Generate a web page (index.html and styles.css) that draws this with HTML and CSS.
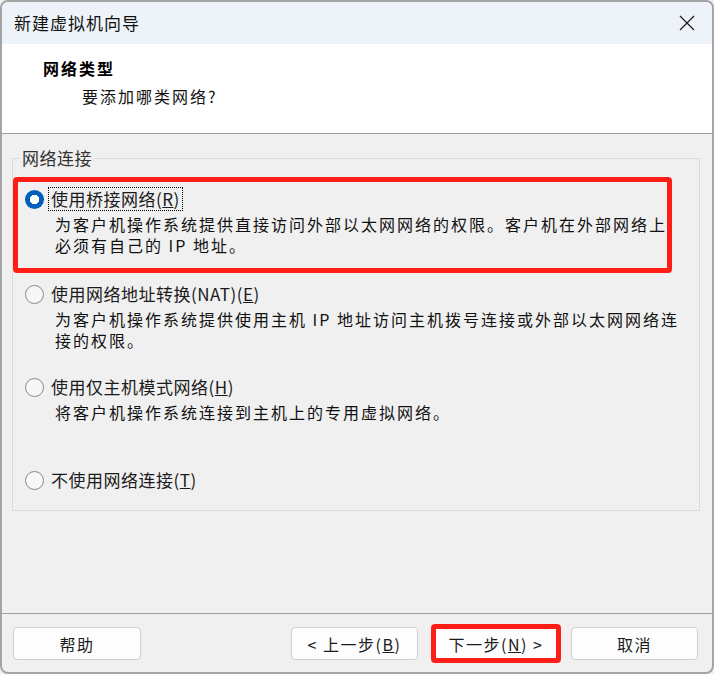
FILE: index.html
```
<!DOCTYPE html>
<html lang="zh-CN">
<head>
<meta charset="utf-8">
<title>新建虚拟机向导</title>
<link rel="stylesheet" href="styles.css">
</head>
<body>
<div class="window">
  <div class="titlebar">
    <span class="title">新建虚拟机向导</span>
    <svg class="close" width="16" height="16" viewBox="0 0 16 16"><path d="M1 1 L15 15 M15 1 L1 15" stroke="#1a1a1a" stroke-width="1.2" fill="none"/></svg>
  </div>
  <div class="header">
    <div class="h-title">网络类型</div>
    <div class="h-sub">要添加哪类网络?</div>
  </div>
  <div class="content">
    <fieldset class="group">
      <legend class="legend">网络连接</legend>
      <div class="option highlight">
        <div class="row"><span class="radio checked"></span><span class="label focus">使用桥接网络(<u>R</u>)</span></div>
        <div class="desc">
          <div class="line">为客户机操作系统提供直接访问外部以太网网络的权限。客户机在外部网络上</div>
          <div class="line">必须有自己的 IP 地址。</div>
        </div>
      </div>
      <div class="option">
        <div class="row"><span class="radio"></span><span class="label">使用网络地址转换(NAT)(<u>E</u>)</span></div>
        <div class="desc">
          <div class="line">为客户机操作系统提供使用主机 IP 地址访问主机拨号连接或外部以太网网络连</div>
          <div class="line">接的权限。</div>
        </div>
      </div>
      <div class="option">
        <div class="row"><span class="radio"></span><span class="label">使用仅主机模式网络(<u>H</u>)</span></div>
        <div class="desc">
          <div class="line">将客户机操作系统连接到主机上的专用虚拟网络。</div>
        </div>
      </div>
      <div class="option last">
        <div class="row"><span class="radio"></span><span class="label">不使用网络连接(<u>T</u>)</span></div>
      </div>
    </fieldset>
  </div>
  <div class="footer">
    <button class="btn">帮助</button>
    <button class="btn prev">&lt; 上一步(<u>B</u>)</button>
    <button class="btn next">下一步(<u>N</u>) &gt;</button>
    <button class="btn cancel">取消</button>
  </div>
</div>
</body>
</html>
```
FILE: styles.css
```
html, body {
  margin: 0;
  padding: 0;
  background: #f0f0f0;
}
body {
  font-family: "Noto Sans CJK SC", "Noto Sans", sans-serif;
  color: #000;
}
.window {
  width: 714px;
  height: 674px;
  box-sizing: border-box;
  border: 2px solid #a4a4a4;
  border-radius: 8px;
  overflow: hidden;
  display: flex;
  flex-direction: column;
  background: #f0f0f0;
}
.titlebar {
  height: 42px;
  flex: none;
  background: #edf3f8;
  display: flex;
  align-items: center;
  justify-content: space-between;
  padding: 0 17px 0 12px;
}
.title {
  font-size: 17px;
  letter-spacing: 1px;
  color: #111;
  line-height: 20px;
}
.close {
  display: block;
}
.header {
  height: 90px;
  flex: none;
  background: #fff;
  border-bottom: 1px solid #a0a0a0;
  padding: 14px 0 0 41px;
  box-sizing: border-box;
}
.h-title {
  font-size: 16px;
  font-weight: bold;
  letter-spacing: 2px;
  line-height: 20px;
}
.h-sub {
  font-size: 16px;
  letter-spacing: 2px;
  line-height: 20px;
  margin: 8px 0 0 39px;
  color: #111;
}
.content {
  flex: 1;
  padding: 16px 12px 0 10px;
}
.group {
  margin: 0;
  border: 1px solid #dadada;
  padding: 0 0 18px 0;
  min-width: 0;
}
.legend {
  font-size: 17px;
  line-height: 16px;
  letter-spacing: 0.5px;
  margin-left: 7px;
  padding: 0 2px;
  color: #333;
}
.option {
  height: 93px;
  padding-left: 12px;
  box-sizing: border-box;
}
.option.highlight {
  height: 96px;
  width: 659px;
  margin-top: 11px;
  margin-bottom: 9px;
  border: 5px solid #ff1e16;
  border-radius: 4px;
  padding: 5px 0 0 7px;
}
.option.last {
  height: 24px;
}
.row {
  display: flex;
  align-items: center;
  height: 24px;
}
.radio {
  width: 19px;
  height: 19px;
  box-sizing: border-box;
  border-radius: 50%;
  border: 1px solid #8a8a8a;
  background: #f7f7f7;
  flex: none;
}
.radio.checked {
  border: none;
  background: radial-gradient(circle, #ffffff 0 4.5px, #005fb8 5px);
}
.label {
  margin-left: 5px;
  padding: 0 2px;
  font-size: 17px;
  letter-spacing: 0.5px;
  line-height: 22px;
  color: #1b1b1b;
}
.label.focus {
  outline: 1px dotted #000;
  outline-offset: 0;
}
.desc {
  margin: 3px 0 0 30px;
  font-size: 16px;
  letter-spacing: 2px;
  white-space: nowrap;
  color: #111;
}
.line {
  height: 21px;
  line-height: 21px;
}
.footer {
  height: 58px;
  flex: none;
  border-top: 1px solid #a0a0a0;
  display: flex;
  align-items: center;
  padding: 0 14px 0 11px;
  box-sizing: content-box;
}
.btn {
  width: 128px;
  height: 33px;
  box-sizing: border-box;
  background: #fdfdfd;
  border: 1px solid #d0d0d0;
  border-radius: 4px;
  font-family: "Noto Sans CJK SC", "Noto Sans", sans-serif;
  font-size: 16px;
  letter-spacing: 1.5px;
  color: #1b1b1b;
  padding: 0;
  margin-top: 1px;
}
.prev {
  width: 127px;
  margin-left: auto;
}
.next {
  width: 130px;
  height: 39px;
  margin-left: 13px;
  border: 5px solid #ff1e16;
  border-radius: 4px;
  background: #fdfdfd;
}
.cancel {
  width: 127px;
  margin-left: 10px;
}
```
